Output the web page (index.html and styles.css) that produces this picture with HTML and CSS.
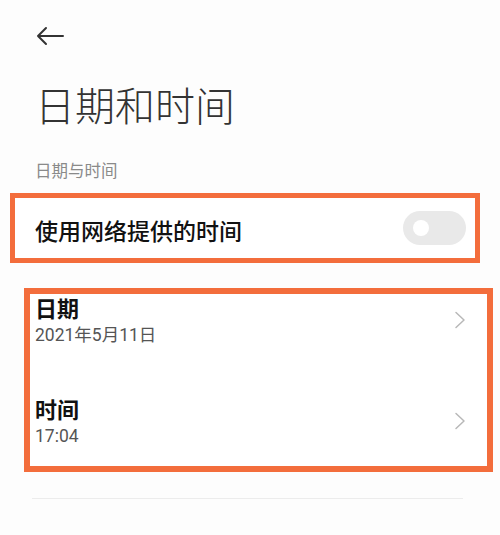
FILE: index.html
```html
<!DOCTYPE html>
<html lang="zh-CN">
<head>
    <meta charset="UTF-8">
    <meta name="viewport" content="width=device-width, initial-scale=1.0">
    <title>日期和时间</title>
    <link rel="stylesheet" href="styles.css">
</head>
<body>
    <div class="back">
        <svg width="28" height="20" viewBox="0 0 28 20">
            <path d="M27 10H2M10 2L2 10l8 8" fill="none" stroke="#333" stroke-width="2" stroke-linecap="round" stroke-linejoin="round"/>
        </svg>
    </div>

    <h1 class="title">日期和时间</h1>

    <p class="label">日期与时间</p>

    <div class="netBox">
        <span class="netText">使用网络提供的时间</span>
        <div class="toggle"><span class="knob"></span></div>
    </div>

    <div class="listBox">
        <div class="row">
            <div class="inner">
                <p class="rowTitle">日期</p>
                <p class="rowSub">2021年5月11日</p>
            </div>
            <svg class="chev" width="12" height="18" viewBox="0 0 12 18">
                <path d="M2 1.5l8 7.5-8 7.5" fill="none" stroke="#b8b8b8" stroke-width="1.5" stroke-linecap="round" stroke-linejoin="round"/>
            </svg>
        </div>
        <div class="row">
            <div class="inner">
                <p class="rowTitle">时间</p>
                <p class="rowSub">17:04</p>
            </div>
            <svg class="chev" width="12" height="18" viewBox="0 0 12 18">
                <path d="M2 1.5l8 7.5-8 7.5" fill="none" stroke="#b8b8b8" stroke-width="1.5" stroke-linecap="round" stroke-linejoin="round"/>
            </svg>
        </div>
    </div>

    <div class="divider"></div>
</body>
</html>
```

FILE: styles.css
```css
body {
    margin: 0;
    background-color: #fdfdfd;
    font-family: "Noto Sans CJK SC", "Noto Sans", sans-serif;
    color: #111;
}

p, h1 {
    margin: 0;
}

.back {
    padding: 26px 0 0 36px;
    height: 20px;
}

.back > svg {
    display: block;
}

.title {
    margin: 38px 0 0 35px;
    font-size: 40px;
    line-height: 40px;
    font-weight: 300;
    color: #333;
}

.label {
    margin: 38px 0 0 35px;
    font-size: 16.5px;
    line-height: 16px;
    color: #8a8a8a;
}

.netBox {
    margin: 15px 20px 0 10px;
    height: 70px;
    box-sizing: border-box;
    border: 5px solid #f36d3c;
    background-color: #fff;
    padding: 0 9px 0 20px;
    display: flex;
    align-items: center;
    justify-content: space-between;
}

.netText {
    font-size: 23px;
    font-weight: 500;
    padding-top: 4px;
}

.toggle {
    width: 63px;
    height: 34px;
    border-radius: 17px;
    background-color: #e9e9e9;
    display: flex;
    align-items: center;
    padding-left: 10px;
    box-sizing: border-box;
}

.knob {
    width: 16px;
    height: 16px;
    border-radius: 50%;
    background-color: #fff;
}

.listBox {
    margin: 25px 7px 0 24px;
    height: 184px;
    box-sizing: border-box;
    border: 6px solid #f36d3c;
    background-color: #fff;
    padding: 2px 21px 21px 5px;
    display: flex;
    flex-direction: column;
    gap: 53px;
}

.row {
    display: flex;
    align-items: center;
    justify-content: space-between;
}

.rowTitle {
    font-size: 22px;
    line-height: 22px;
    font-weight: 700;
}

.rowSub {
    margin-top: 9px;
    font-family: Roboto, "Noto Sans CJK SC", sans-serif;
    font-size: 17.5px;
    line-height: 17px;
    color: #555;
}

.chev {
    display: block;
}

.divider {
    margin: 26px 0 0 32px;
    width: 431px;
    height: 1px;
    background-color: #ececec;
}
```
